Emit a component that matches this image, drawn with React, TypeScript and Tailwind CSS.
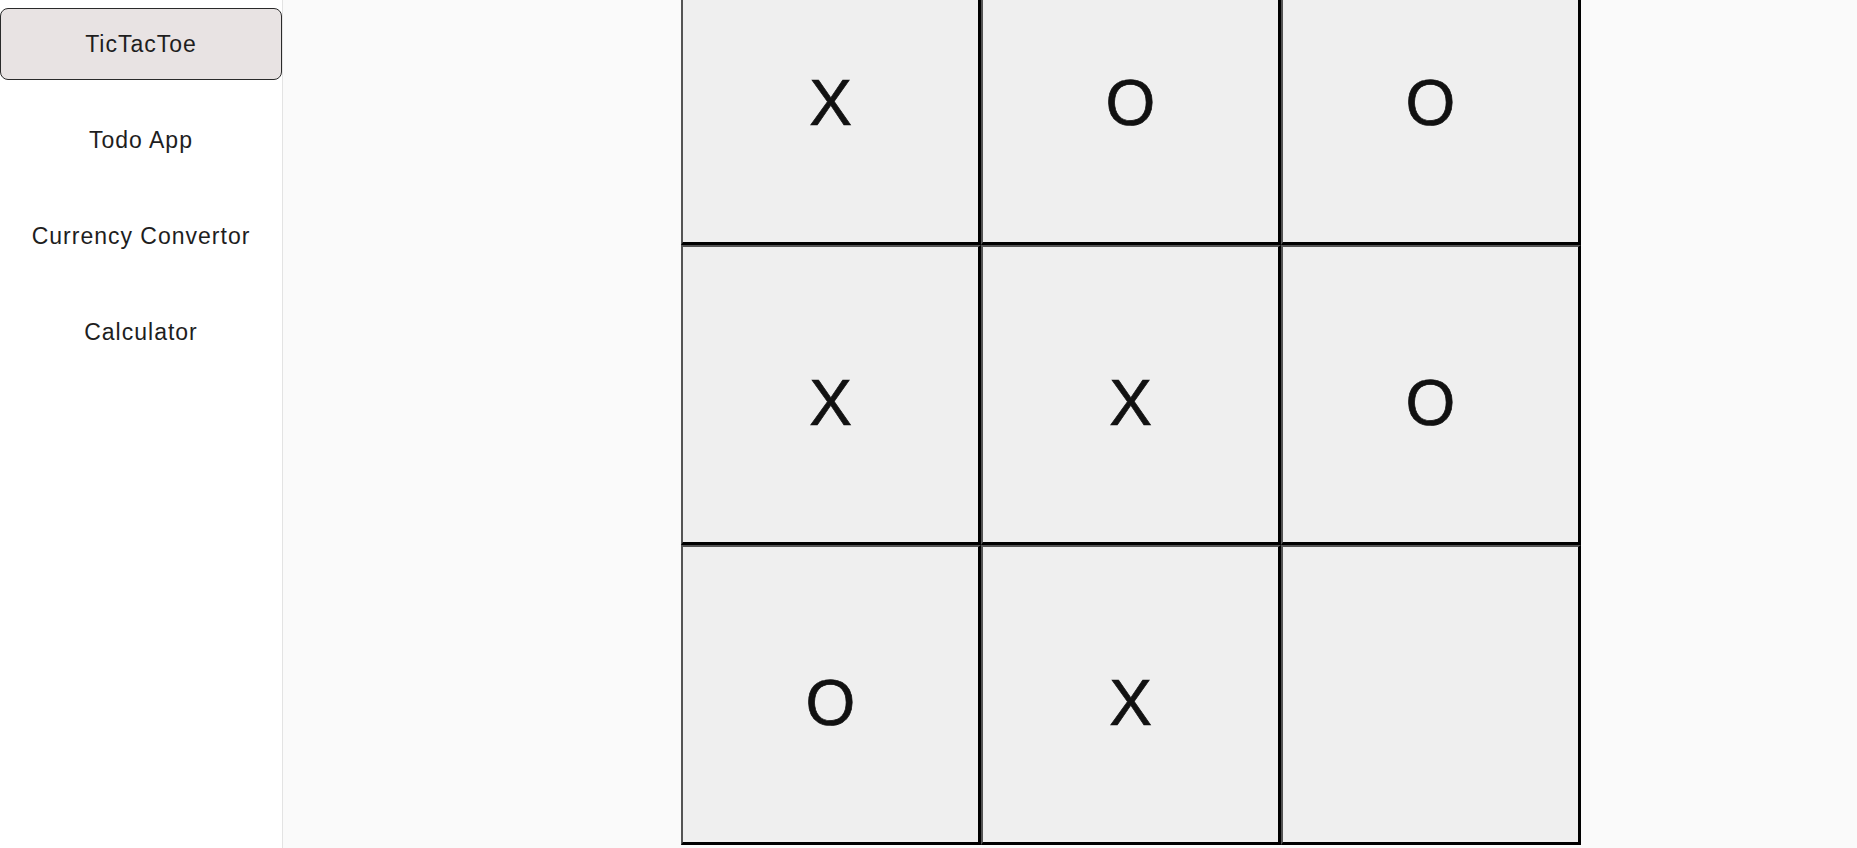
import React from "react";

const board = ["X", "O", "O", "X", "X", "O", "O", "X", ""];
const apps = ["TicTacToe", "Todo App", "Currency Convertor", "Calculator"];

export default function App() {
  return (
    <div
      className="flex h-[848px] w-full overflow-hidden bg-[#fafafa]"
      style={{ fontFamily: '"Liberation Sans", Arial, sans-serif' }}
    >
      <aside className="flex w-[283px] shrink-0 flex-col gap-6 border-r border-[#e3e3e3] bg-white pt-2">
        {apps.map((a, i) => (
          <div
            key={a}
            className={
              i === 0
                ? "flex h-[72px] w-[282px] items-center justify-center rounded-lg border border-[#2a2a2a] bg-[#e8e3e3] text-[23px] tracking-[1px] text-[#1e1e1e]"
                : "flex h-[72px] w-[282px] items-center justify-center text-[23px] tracking-[1px] text-[#1e1e1e]"
            }
          >
            {a}
          </div>
        ))}
      </aside>
      <main className="flex-1">
        <div className="ml-[398px] -mt-[55px] grid w-[900px] grid-cols-3">
          {board.map((c, i) => (
            <div
              key={i}
              className="flex h-[300px] w-[300px] items-center justify-center border-t-2 border-l-2 border-r-[3px] border-b-[3px] border-t-[#545454] border-l-[#545454] border-r-black border-b-black bg-[#efefef] pt-[17px] text-[64px] leading-none text-[#111] [-webkit-text-stroke:0.7px_#111]"
            >
              {c}
            </div>
          ))}
        </div>
      </main>
    </div>
  );
}
